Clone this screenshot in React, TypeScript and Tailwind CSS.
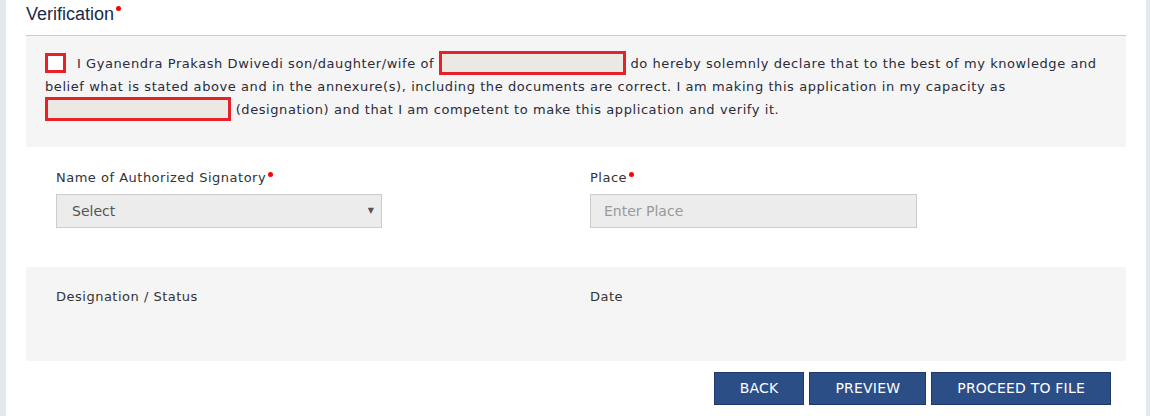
import React from "react";

const Req = () => (
  <span className="inline-block w-[5px] h-[5px] rounded-full bg-[#ff0000] align-top ml-[2px] mt-[3px]" />
);

export default function App() {
  const font = { fontFamily: '"DejaVu Sans", Verdana, sans-serif' };
  return (
    <div className="flex w-[1150px] h-[416px] bg-white overflow-hidden" style={font}>
      <div className="w-[6px] bg-[#e4e7eb]" />
      <div className="flex-1 px-[20px] flex flex-col">
        <div className="h-[36px] border-b border-[#cccccc] pt-[3px]">
          <h3
            className="text-[18px] leading-[22px] text-[#1d2a4a] flex items-start"
            style={{ fontFamily: '"Liberation Sans", Arial, sans-serif' }}
          >
            Verification
            <span className="inline-block w-[5px] h-[5px] rounded-full bg-[#ff0000] ml-[2px] mt-[3px]" />
          </h3>
        </div>

        <div className="bg-[#f5f5f5] pt-[16px] pb-[26px] pl-[19px] pr-[20px] h-[111px]">
          <p className="text-[13px] leading-[23px] text-[#2b2b3a] tracking-[0.57px]">
            <span className="inline-block align-middle w-[21px] h-[20px] border-[3px] border-[#e8202a] bg-white mr-[11px] -mt-[3px]" />
            I Gyanendra Prakash Dwivedi son/daughter/wife of{" "}
            <span className="inline-block align-middle w-[187px] h-[24px] border-[3px] border-[#e8202a] bg-[#ebe9e3] -mt-[3px]" />{" "}
            do hereby solemnly declare that to the best of my knowledge and belief what is stated above and in the
            annexure(s), including the documents are correct. I am making this application in my capacity as{" "}
            <span className="inline-block align-middle w-[186px] h-[24px] border-[3px] border-[#e8202a] bg-[#ebe9e3] -mt-[3px]" />{" "}
            (designation) and that I am competent to make this application and verify it.
          </p>
        </div>

        <div className="grid grid-cols-2 px-[30px] pt-[22px] h-[120px]">
          <div>
            <label className="flex text-[13px] leading-[18px] text-[#333333] tracking-[0.5px]">
              Name of Authorized Signatory
              <Req />
            </label>
            <div className="mt-[7px] w-[326px] h-[34px] bg-[#ececec] border border-[#cccccc] flex items-center justify-between pl-[15px] pr-[7px]">
              <span className="text-[14px] text-[#555555]">Select</span>
              <span className="text-[8px] text-[#555555]">▼</span>
            </div>
          </div>
          <div className="pl-[14px]">
            <label className="flex text-[13px] leading-[18px] text-[#333333] tracking-[0.5px]">
              Place
              <Req />
            </label>
            <div className="mt-[7px] w-[327px] h-[34px] bg-[#ececec] border border-[#cccccc] flex items-center pl-[13px]">
              <span className="text-[14px] text-[#999999]">Enter Place</span>
            </div>
          </div>
        </div>

        <div className="bg-[#f5f5f5] h-[94px] grid grid-cols-2 px-[30px] pt-[21px]">
          <div className="text-[13px] leading-[18px] text-[#333333] tracking-[0.5px]">Designation / Status</div>
          <div className="pl-[14px] text-[13px] leading-[18px] text-[#333333] tracking-[0.5px]">Date</div>
        </div>

        <div className="flex justify-end gap-[5px] pr-[15px] pt-[11px]">
          {["BACK", "PREVIEW", "PROCEED TO FILE"].map((t) => (
            <button
              key={t}
              className="h-[33px] px-[25px] bg-[#2c4e86] border border-[#1f3a68] text-white text-[14px] tracking-[0.2px]"
            >
              {t}
            </button>
          ))}
        </div>
      </div>
      <div className="w-[4px] bg-[#e4e7eb]" />
    </div>
  );
}
